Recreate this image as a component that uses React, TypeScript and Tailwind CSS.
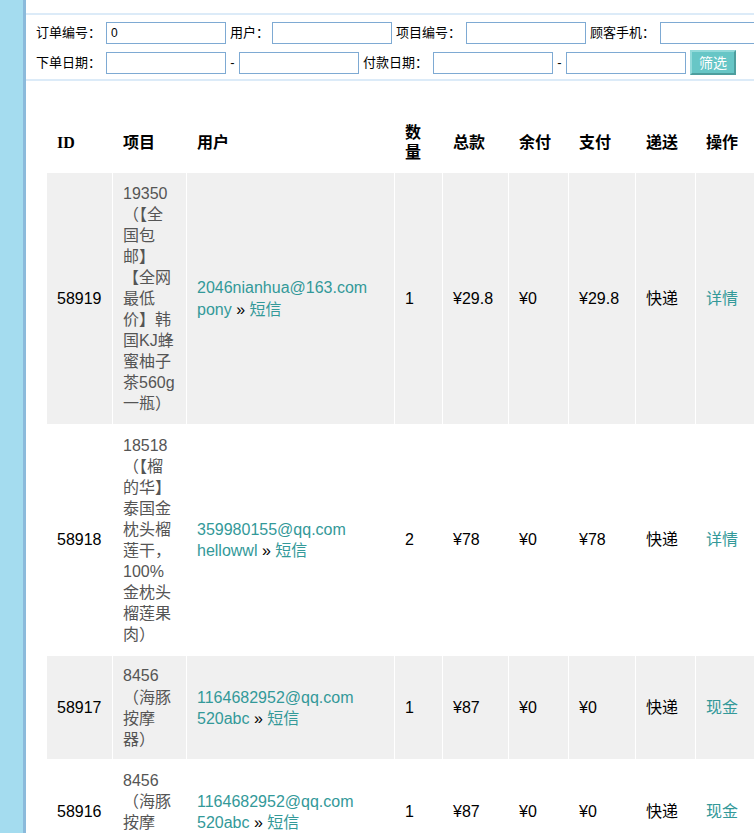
import React from "react";

type Row = {
  id: string;
  item: string;
  email: string;
  user: string;
  qty: string;
  total: string;
  rest: string;
  paid: string;
  ship: string;
  op: string;
};

const rows: Row[] = [
  {
    id: "58919",
    item: "19350 （【全国包邮】【全网最低价】韩国KJ蜂蜜柚子茶560g一瓶）",
    email: "2046nianhua@163.com",
    user: "pony",
    qty: "1",
    total: "¥29.8",
    rest: "¥0",
    paid: "¥29.8",
    ship: "快递",
    op: "详情",
  },
  {
    id: "58918",
    item: "18518 （【榴的华】泰国金枕头榴莲干，100%金枕头榴莲果肉）",
    email: "359980155@qq.com",
    user: "hellowwl",
    qty: "2",
    total: "¥78",
    rest: "¥0",
    paid: "¥78",
    ship: "快递",
    op: "详情",
  },
  {
    id: "58917",
    item: "8456 （海豚按摩器）",
    email: "1164682952@qq.com",
    user: "520abc",
    qty: "1",
    total: "¥87",
    rest: "¥0",
    paid: "¥0",
    ship: "快递",
    op: "现金",
  },
  {
    id: "58916",
    item: "8456 （海豚按摩器）",
    email: "1164682952@qq.com",
    user: "520abc",
    qty: "1",
    total: "¥87",
    rest: "¥0",
    paid: "¥0",
    ship: "快递",
    op: "现金",
  },
];

function Input({ value = "" }: { value?: string }) {
  return (
    <input
      readOnly
      value={value}
      className="h-[22px] w-[120px] shrink-0 border border-[#7eaad3] bg-white px-[4px] text-[12px] text-black outline-none [font-family:'Liberation_Sans',sans-serif]"
    />
  );
}

function Label({ children, className = "" }: { children: React.ReactNode; className?: string }) {
  return <span className={`shrink-0 text-[13px] leading-[22px] text-black ${className}`}>{children}</span>;
}

export default function App() {
  return (
    <div className="flex h-[833px] w-[754px] overflow-hidden bg-white [font-family:'Liberation_Sans','Noto_Sans_CJK_SC',sans-serif]">
      <div className="w-[26px] shrink-0 border-r-[3px] border-[#8bbadb] bg-[#a4dcef]" />
      <div className="min-w-0 flex-1">
        <div className="pt-[13px]">
          <div className="w-[900px] border-y-2 border-[#dcebf8] pl-[10px] pt-[7px] pb-[4px]">
            <div className="flex items-center gap-[4px] whitespace-nowrap">
              <Label className="w-[66px]">订单编号：</Label>
              <Input value="0" />
              <Label className="w-[38px]">用户：</Label>
              <Input />
              <Label className="w-[66px]">项目编号：</Label>
              <Input />
              <Label className="w-[66px]">顾客手机：</Label>
              <Input />
            </div>
            <div className="mt-[6px] flex h-[25px] items-center gap-[4px] whitespace-nowrap">
              <Label className="w-[66px]">下单日期：</Label>
              <Input />
              <Label className="w-[5px] text-center">-</Label>
              <Input />
              <Label className="w-[66px]">付款日期：</Label>
              <Input />
              <Label className="w-[5px] text-center">-</Label>
              <Input />
              <button className="h-[25px] w-[46px] shrink-0 border-2 border-t-[#92dada] border-l-[#92dada] border-b-[#4d9e9e] border-r-[#4d9e9e] bg-[#67c6c6] text-[14px] leading-[20px] text-white">
                筛选
              </button>
            </div>
          </div>
        </div>

        <table className="ml-[20px] mt-[31px] w-[721px] table-fixed border-separate border-spacing-[1px]">
          <colgroup>
            <col className="w-[65px]" />
            <col className="w-[73px]" />
            <col className="w-[207px]" />
            <col className="w-[47px]" />
            <col className="w-[65px]" />
            <col className="w-[59px]" />
            <col className="w-[66px]" />
            <col className="w-[59px]" />
            <col className="w-[70px]" />
          </colgroup>
          <thead>
            <tr className="text-left text-[16px] font-bold leading-[20px] text-black [font-family:'Liberation_Serif','Noto_Sans_CJK_SC',serif]">
              <th className="px-[10px] py-[9.5px] align-middle">ID</th>
              <th className="px-[10px] py-[9.5px] align-middle">项目</th>
              <th className="px-[10px] py-[9.5px] align-middle">用户</th>
              <th className="px-[10px] py-[9.5px] align-middle">数量</th>
              <th className="px-[10px] py-[9.5px] align-middle">总款</th>
              <th className="px-[10px] py-[9.5px] align-middle">余付</th>
              <th className="px-[10px] py-[9.5px] align-middle">支付</th>
              <th className="px-[10px] py-[9.5px] align-middle">递送</th>
              <th className="px-[10px] py-[9.5px] align-middle">操作</th>
            </tr>
          </thead>
          <tbody>
            {rows.map((r, i) => (
              <tr
                key={r.id}
                className={`text-[16px] leading-[21.1px] text-black ${i % 2 === 0 ? "bg-[#f0f0f0]" : "bg-white"}`}
              >
                <td className="px-[10px] py-[9.5px] align-middle">{r.id}</td>
                <td className="px-[10px] py-[9.5px] align-middle text-[#555555]">{r.item}</td>
                <td className="whitespace-nowrap px-[10px] py-[9.5px] align-middle">
                  <div className="text-[#339999]">{r.email}</div>
                  <div>
                    <span className="text-[#339999]">{r.user}</span> » <span className="text-[#339999]">短信</span>
                  </div>
                </td>
                <td className="px-[10px] py-[9.5px] align-middle">{r.qty}</td>
                <td className="px-[10px] py-[9.5px] align-middle">{r.total}</td>
                <td className="px-[10px] py-[9.5px] align-middle">{r.rest}</td>
                <td className="px-[10px] py-[9.5px] align-middle">{r.paid}</td>
                <td className="px-[10px] py-[9.5px] align-middle">{r.ship}</td>
                <td className="px-[10px] py-[9.5px] align-middle text-[#339999]">{r.op}</td>
              </tr>
            ))}
          </tbody>
        </table>
      </div>
    </div>
  );
}
